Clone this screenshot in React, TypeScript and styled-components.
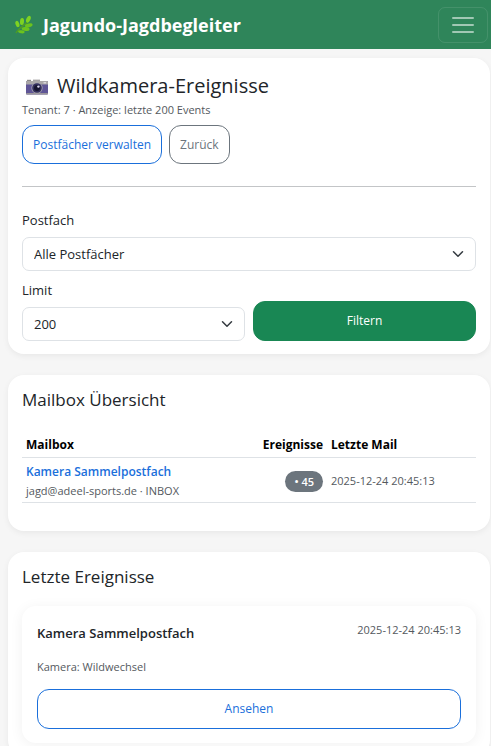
import React from 'react';
import styled, { createGlobalStyle, css } from 'styled-components';

const GlobalStyle = createGlobalStyle`
  *, *::before, *::after { box-sizing: border-box; }
  html { scrollbar-width: none; }
  body {
    margin: 0;
    background: #f6f6f6;
    color: #212529;
    font-family: "Open Sans", "Noto Sans", sans-serif;
    font-size: 13px;
    line-height: 20px;
  }
  button, select { font-family: inherit; }
`;

const Navbar = styled.header`
  display: flex;
  align-items: center;
  justify-content: space-between;
  height: 49px;
  padding: 0 3px 0 14px;
  background: #2f855a;
`;

const Brand = styled.a`
  display: flex;
  align-items: center;
  gap: 9px;
  color: #fff;
  font-size: 18px;
  font-weight: 700;
  line-height: 28px;
  text-decoration: none;
`;

const Toggler = styled.button`
  display: grid;
  place-items: center;
  width: 50px;
  height: 36px;
  padding: 0;
  border: 1px solid rgba(255, 255, 255, 0.1);
  border-radius: 7px;
  background: transparent;
`;

const Page = styled.main`
  display: flex;
  flex-direction: column;
  gap: 21px;
  padding: 9px 1px 24px 8px;
`;

const Card = styled.section`
  padding: 14px 14px 13px;
  border-radius: 16px;
  background: #fff;
  box-shadow: 0 2px 6px rgba(0, 0, 0, 0.06);
`;

const PageTitle = styled.h1`
  display: flex;
  align-items: center;
  gap: 8px;
  margin: 0;
  padding-left: 3px;
  font-size: 20px;
  font-weight: 400;
  line-height: 28px;
`;

const SectionTitle = styled.h2`
  margin: 0 0 18px;
  font-size: 17px;
  font-weight: 400;
  line-height: 22px;
`;

const Muted = styled.p`
  margin: 0;
  color: #54595e;
  font-size: 11px;
  line-height: 20px;
`;

const Actions = styled.div`
  display: flex;
  gap: 7px;
  margin-top: 5px;
`;

const tones = {
  primary: css`
    border-color: #1a6fdb;
    background: #fff;
    color: #1a6fdb;
  `,
  secondary: css`
    border-color: #6c757d;
    background: #fff;
    color: #6c757d;
  `,
  success: css`
    border-color: #198754;
    background: #198754;
    color: #fff;
  `,
};

const Button = styled.button<{ $tone: keyof typeof tones; $block?: boolean }>`
  height: ${({ $block }) => ($block ? 40 : 39)}px;
  width: ${({ $block }) => ($block ? '100%' : 'auto')};
  padding: 0 10px;
  border: 1px solid;
  border-radius: 12px;
  font-size: 12px;
  line-height: 20px;
  cursor: pointer;
  ${({ $tone }) => tones[$tone]}
`;

const Divider = styled.hr`
  margin: 22px 0 21px;
  border: 0;
  border-top: 1px solid #c3c5c7;
`;

const Filters = styled.form`
  display: grid;
  grid-template-columns: 1fr 1fr;
  align-items: end;
  gap: 7px 8px;
`;

const Field = styled.div<{ $wide?: boolean }>`
  grid-column: ${({ $wide }) => ($wide ? '1 / -1' : 'auto')};
`;

const Label = styled.label`
  display: block;
  margin-bottom: 5px;
  font-size: 13px;
  line-height: 24px;
`;

const SelectBox = styled.div`
  position: relative;

  svg {
    position: absolute;
    top: 11px;
    right: 12px;
    pointer-events: none;
  }
`;

const Select = styled.select`
  display: block;
  width: 100%;
  height: 34px;
  padding: 0 32px 0 11px;
  border: 1px solid #dee2e6;
  border-radius: 7px;
  background: #fff;
  color: #212529;
  font-size: 13px;
  appearance: none;
`;

const Table = styled.table`
  width: 100%;
  margin: 21px 0 15px;
  border-collapse: collapse;
`;

const Th = styled.th<{ $end?: boolean }>`
  padding: 2px 4px 1px;
  border-bottom: 1px solid #dee2e6;
  color: #000;
  font-size: 12px;
  font-weight: 700;
  line-height: 22px;
  text-align: ${({ $end }) => ($end ? 'right' : 'left')};
  white-space: nowrap;
`;

const Td = styled.td<{ $end?: boolean }>`
  padding: 4px 4px 2px;
  border-bottom: 1px solid #dee2e6;
  text-align: ${({ $end }) => ($end ? 'right' : 'left')};
`;

const MailCol = styled.col`
  width: 149px;
`;

const CountCol = styled.col`
  width: 68px;
`;

const MailboxLink = styled.a`
  display: block;
  color: #1a6fdb;
  font-size: 12px;
  font-weight: 600;
  line-height: 19px;
  text-decoration: none;
`;

const Address = styled(Muted)`
  line-height: 19px;
`;

const Badge = styled.span`
  display: inline-block;
  padding: 0 9px;
  border-radius: 11px;
  background: #6c757d;
  color: #fff;
  font-size: 11px;
  font-weight: 600;
  line-height: 21px;
  white-space: nowrap;
`;

const EventCard = styled.article`
  padding: 14px 15px;
  border-radius: 14px;
  background: #fff;
  box-shadow: 0 2px 14px rgba(0, 0, 0, 0.06);
`;

const EventHead = styled.div`
  display: flex;
  align-items: flex-start;
  justify-content: space-between;
  margin-bottom: 10px;
`;

const EventTitle = styled.h3`
  margin: 0;
  font-size: 13px;
  font-weight: 600;
  line-height: 27px;
`;

const EventMeta = styled(Muted)`
  margin-bottom: 12px;
`;

const Chevron = () => (
  <svg width="12" height="12" viewBox="0 0 16 16" fill="none" aria-hidden="true">
    <path d="m2 5 6 6 6-6" stroke="#343a40" strokeWidth="2" strokeLinecap="round" strokeLinejoin="round" />
  </svg>
);

const Herb = () => (
  <svg width="20" height="20" viewBox="0 0 20 20" aria-hidden="true">
    <path d="M2 18C4 14 9 11 15 6" stroke="#4f9e22" strokeWidth="1.4" fill="none" />
    <g fill="#7ed321">
      <ellipse cx="3.4" cy="9" rx="1.9" ry="3.2" transform="rotate(-18 3.4 9)" />
      <ellipse cx="8" cy="6.6" rx="2" ry="3.5" transform="rotate(5 8 6.6)" />
      <ellipse cx="14.4" cy="4.2" rx="2" ry="3.6" transform="rotate(25 14.4 4.2)" />
    </g>
    <g fill="#6cc31d">
      <ellipse cx="14.8" cy="10.4" rx="3.9" ry="1.9" transform="rotate(-12 14.8 10.4)" />
      <ellipse cx="11.6" cy="14" rx="4" ry="1.9" transform="rotate(6 11.6 14)" />
      <ellipse cx="7.4" cy="16.8" rx="3.3" ry="1.5" transform="rotate(8 7.4 16.8)" />
    </g>
  </svg>
);

const Camera = () => (
  <svg width="24" height="20" viewBox="0 0 24 20" aria-hidden="true">
    <path d="M8 5V3.6h7V5z" fill="#a5a2a3" />
    <rect x="2" y="3.8" width="4" height="2" fill="#8c8889" />
    <rect x="1" y="5" width="22" height="13.4" rx="1" fill="#5f5596" />
    <path d="M1 8.4V6a1 1 0 0 1 1-1h20a1 1 0 0 1 1 1v2.4z" fill="#aaa7a8" />
    <rect x="1" y="17" width="22" height="1.6" rx="0.8" fill="#9a9699" />
    <rect x="18.5" y="6" width="2.6" height="1.5" fill="#d9d7dc" />
    <circle cx="12" cy="12" r="5.6" fill="#aaa7b0" />
    <circle cx="12" cy="12" r="4.8" fill="#332f5c" />
    <circle cx="12" cy="12" r="3" fill="#17152f" />
    <circle cx="13.4" cy="10.6" r="1.2" fill="#d8d5ee" />
  </svg>
);

const MenuIcon = () => (
  <svg width="28" height="28" viewBox="0 0 28 28" aria-hidden="true">
    <path stroke="rgba(255,255,255,0.55)" strokeLinecap="round" strokeWidth="2" d="M4 7h20M4 14h20M4 21h20" />
  </svg>
);

export default function App() {
  return (
    <>
      <GlobalStyle />
      <Navbar>
        <Brand href="#">
          <Herb />
          Jagundo-Jagdbegleiter
        </Brand>
        <Toggler type="button" aria-label="Navigation umschalten">
          <MenuIcon />
        </Toggler>
      </Navbar>
      <Page>
        <Card>
          <PageTitle>
            <Camera />
            Wildkamera-Ereignisse
          </PageTitle>
          <Muted>Tenant: 7 · Anzeige: letzte 200 Events</Muted>
          <Actions>
            <Button type="button" $tone="primary">Postfächer verwalten</Button>
            <Button type="button" $tone="secondary">Zurück</Button>
          </Actions>
          <Divider />
          <Filters onSubmit={(e) => e.preventDefault()}>
            <Field $wide>
              <Label htmlFor="postfach">Postfach</Label>
              <SelectBox>
                <Select id="postfach" defaultValue="all">
                  <option value="all">Alle Postfächer</option>
                  <option value="kamera">Kamera Sammelpostfach</option>
                </Select>
                <Chevron />
              </SelectBox>
            </Field>
            <Field>
              <Label htmlFor="limit">Limit</Label>
              <SelectBox>
                <Select id="limit" defaultValue="200">
                  <option value="100">100</option>
                  <option value="200">200</option>
                </Select>
                <Chevron />
              </SelectBox>
            </Field>
            <Button type="submit" $tone="success" $block>Filtern</Button>
          </Filters>
        </Card>

        <Card>
          <SectionTitle>Mailbox Übersicht</SectionTitle>
          <Table>
            <colgroup>
              <col />
              <CountCol />
              <MailCol />
            </colgroup>
            <thead>
              <tr>
                <Th scope="col">Mailbox</Th>
                <Th scope="col" $end>Ereignisse</Th>
                <Th scope="col">Letzte Mail</Th>
              </tr>
            </thead>
            <tbody>
              <tr>
                <Td>
                  <MailboxLink href="#">Kamera Sammelpostfach</MailboxLink>
                  <Address>jagd@adeel-sports.de · INBOX</Address>
                </Td>
                <Td $end><Badge>• 45</Badge></Td>
                <Td><Muted>2025-12-24 20:45:13</Muted></Td>
              </tr>
            </tbody>
          </Table>
        </Card>

        <Card>
          <SectionTitle>Letzte Ereignisse</SectionTitle>
          <EventCard>
            <EventHead>
              <EventTitle>Kamera Sammelpostfach</EventTitle>
              <Muted>2025-12-24 20:45:13</Muted>
            </EventHead>
            <EventMeta>Kamera: Wildwechsel</EventMeta>
            <Button type="button" $tone="primary" $block>Ansehen</Button>
          </EventCard>
        </Card>
      </Page>
    </>
  );
}
